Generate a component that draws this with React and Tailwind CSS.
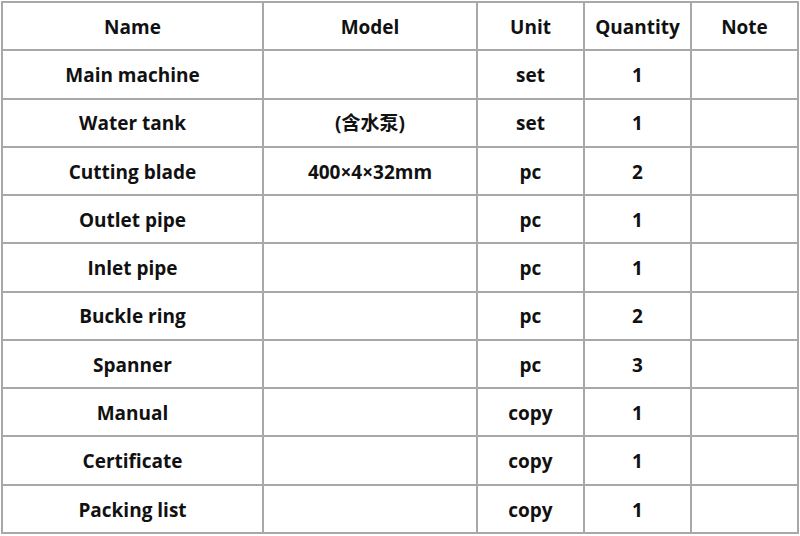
const rows = [
  ["Main machine", "", "set", "1"],
  ["Water tank", "(含水泵)", "set", "1"],
  ["Cutting blade", "400×4×32mm", "pc", "2"],
  ["Outlet pipe", "", "pc", "1"],
  ["Inlet pipe", "", "pc", "1"],
  ["Buckle ring", "", "pc", "2"],
  ["Spanner", "", "pc", "3"],
  ["Manual", "", "copy", "1"],
  ["Certificate", "", "copy", "1"],
  ["Packing list", "", "copy", "1"],
];

const cell = "border-2 border-[#a8a8a8] text-center align-middle p-0 pt-[2px]";

export default function App() {
  return (
    <div
      className="w-[800px] h-[536px] bg-white pl-[1px] pt-[1px] text-[#111] font-bold text-[19px]"
      style={{ fontFamily: '"Open Sans", "Noto Sans CJK SC", sans-serif' }}
    >
      <table className="border-collapse table-fixed w-[797px] h-[533px]">
        <colgroup>
          <col className="w-[261px]" />
          <col className="w-[214px]" />
          <col className="w-[107px]" />
          <col className="w-[107px]" />
          <col className="w-[107px]" />
        </colgroup>
        <tbody>
          <tr>
            <td className={cell}>Name</td>
            <td className={cell}>Model</td>
            <td className={cell}>Unit</td>
            <td className={cell}>Quantity</td>
            <td className={cell}>Note</td>
          </tr>
          {rows.map((r) => (
            <tr key={r[0]}>
              <td className={cell}>{r[0]}</td>
              <td className={cell}>{r[1]}</td>
              <td className={cell}>{r[2]}</td>
              <td className={cell}>{r[3]}</td>
              <td className={cell}></td>
            </tr>
          ))}
        </tbody>
      </table>
    </div>
  );
}
